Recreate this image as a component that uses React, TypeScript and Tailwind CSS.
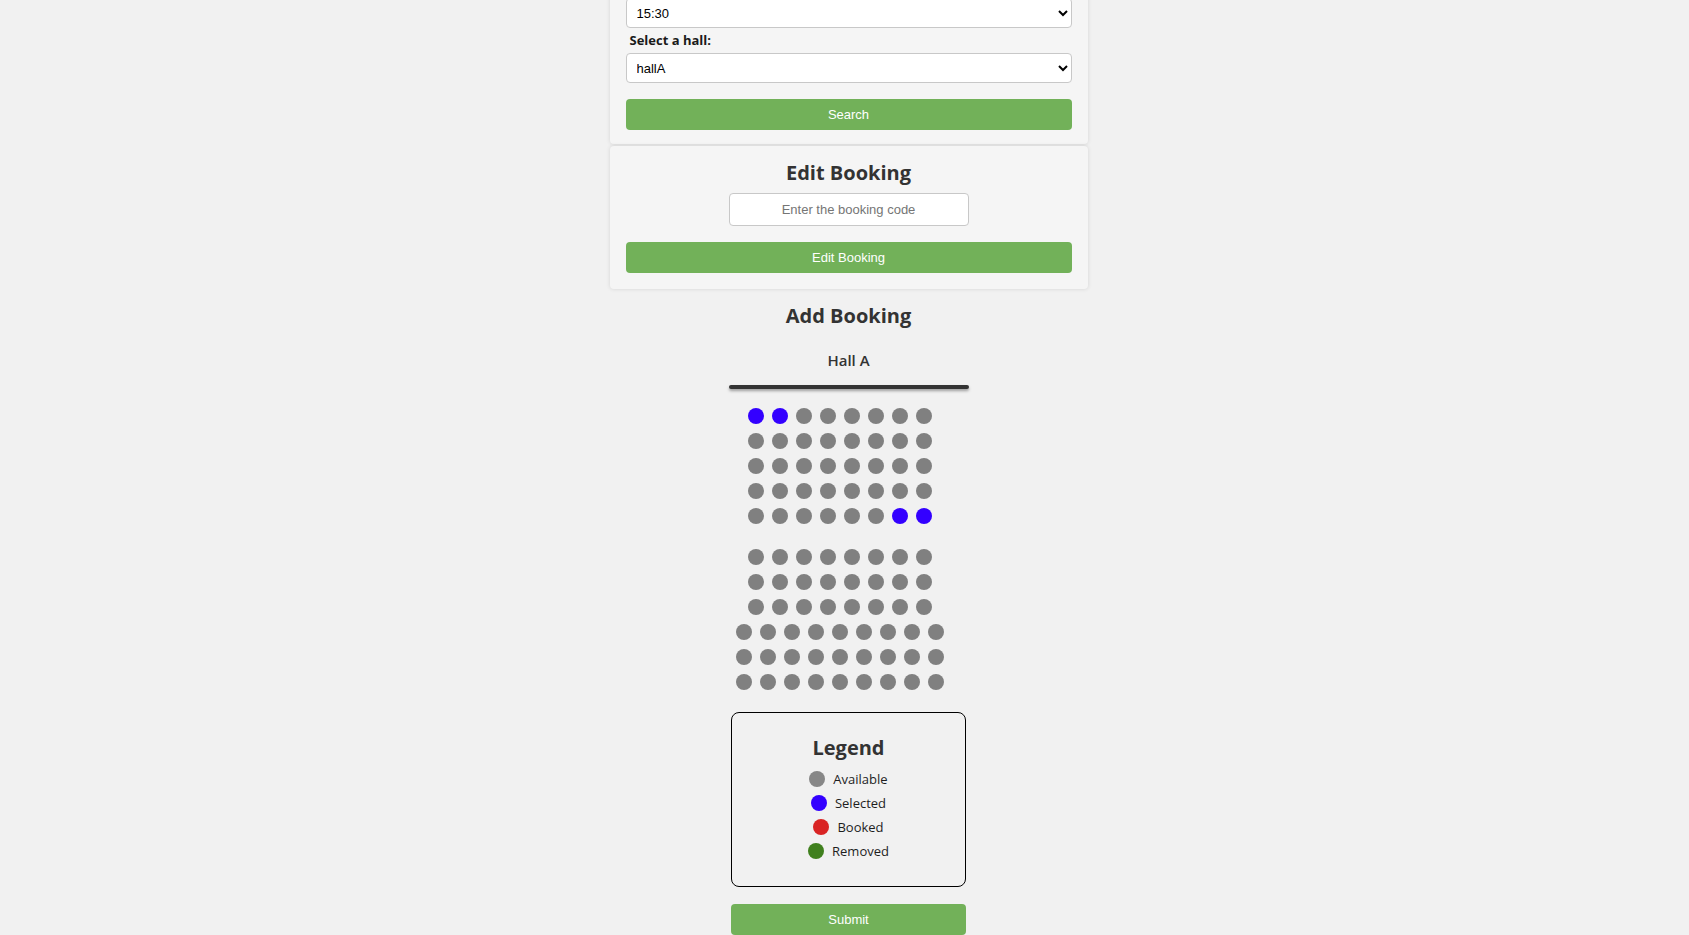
import React from "react";

const GRAY = "bg-[#808080]";
const BLUE = "bg-[#3300ff]";

function Seat({ selected }: { selected?: boolean }) {
  return <div className={`w-[16px] h-[16px] shrink-0 rounded-full ${selected ? BLUE : GRAY}`} />;
}

function Row({ count, selected = [] as number[] }: { count: number; selected?: number[] }) {
  return (
    <div className="flex gap-[8px]">
      {Array.from({ length: count }).map((_, i) => (
        <Seat key={i} selected={selected.includes(i)} />
      ))}
    </div>
  );
}

function LegendItem({ color, label }: { color: string; label: string }) {
  return (
    <div className="flex items-center justify-center gap-[8px] h-[16px]">
      <div className={`w-[16px] h-[16px] rounded-full ${color}`} />
      <span className="text-[13px] leading-[16px] text-[#1e1e1e]">{label}</span>
    </div>
  );
}

export default function App() {
  const arial = { fontFamily: '"Liberation Sans", Arial, sans-serif' };
  return (
    <div
      className="min-h-screen bg-[#f1f1f1] flex items-start justify-center pl-[8px] overflow-hidden"
      style={{ fontFamily: '"Open Sans", "Noto Sans", sans-serif' }}
    >
      <div className="w-[478px] -mt-[37px] flex flex-col items-center">
        {/* Search card */}
        <div className="w-full shrink-0 bg-[#f5f5f5] shadow-[0_0_4px_rgba(0,0,0,0.12)] rounded-[4px] px-[16px] pt-[13px] pb-[14px]">
          <label className="block pl-[4px] h-[18px] mb-[4px] text-[13px] leading-[18px] font-bold text-[#1a1a1a]">
            Select a time:
          </label>
          <select
            className="w-full h-[30px] bg-white border border-[#c8c8c8] rounded-[4px] pl-[6px] text-[13px] text-black"
            style={arial}
            defaultValue="15:30"
          >
            <option>15:30</option>
          </select>
          <label className="block pl-[4px] h-[18px] mt-[3px] mb-[4px] text-[13px] leading-[18px] font-bold text-[#1a1a1a]">
            Select a hall:
          </label>
          <select
            className="w-full h-[30px] bg-white border border-[#c8c8c8] rounded-[4px] pl-[6px] text-[13px] text-black"
            style={arial}
            defaultValue="hallA"
          >
            <option>hallA</option>
          </select>
          <button
            className="w-full h-[31px] mt-[16px] bg-[#72b159] rounded-[4px] text-white text-[13px]"
            style={arial}
          >
            Search
          </button>
        </div>

        {/* Edit booking card */}
        <div className="w-full shrink-0 mt-[2px] bg-[#f5f5f5] shadow-[0_0_4px_rgba(0,0,0,0.12)] rounded-[4px] px-[16px] pt-[15px] pb-[16px] flex flex-col items-center">
          <h2 className="text-[20px] leading-[24px] font-bold text-[#333]">Edit Booking</h2>
          <input
            className="mt-[8px] w-[240px] h-[33px] bg-white border border-[#c8c8c8] rounded-[4px] text-center text-[13px] placeholder:text-[#757575]"
            style={arial}
            placeholder="Enter the booking code"
          />
          <button
            className="w-full h-[31px] mt-[16px] bg-[#72b159] rounded-[4px] text-white text-[13px]"
            style={arial}
          >
            Edit Booking
          </button>
        </div>

        {/* Add booking */}
        <h2 className="shrink-0 mt-[15px] text-[20px] leading-[24px] font-bold text-[#333]">Add Booking</h2>
        <div className="shrink-0 mt-[22px] text-[15px] leading-[20px] font-semibold text-[#333]">Hall A</div>
        <div className="shrink-0 mt-[15px] w-[240px] h-[4px] rounded-full bg-[#333] shadow-[0_2px_3px_rgba(0,0,0,0.35)]" />

        <div className="shrink-0 mt-[19px] flex flex-col items-center gap-[9px] pr-[18px]">
          <Row count={8} selected={[0, 1]} />
          <Row count={8} />
          <Row count={8} />
          <Row count={8} />
          <Row count={8} selected={[6, 7]} />
          <div className="h-[7px]" />
          <Row count={8} />
          <Row count={8} />
          <Row count={8} />
          <Row count={9} />
          <Row count={9} />
          <Row count={9} />
        </div>

        {/* Legend */}
        <div className="shrink-0 mt-[22px] w-[235px] border border-black rounded-[8px] pt-[23px] pb-[27px] flex flex-col items-center">
          <h3 className="text-[20px] leading-[24px] font-bold text-[#333]">Legend</h3>
          <div className="mt-[11px] flex flex-col gap-[8px]">
            <LegendItem color="bg-[#878787]" label="Available" />
            <LegendItem color="bg-[#3300ff]" label="Selected" />
            <LegendItem color="bg-[#d92424]" label="Booked" />
            <LegendItem color="bg-[#40801e]" label="Removed" />
          </div>
        </div>

        <button
          className="shrink-0 mt-[17px] w-[235px] h-[31px] bg-[#72b159] rounded-[4px] text-white text-[13px]"
          style={arial}
        >
          Submit
        </button>
      </div>
    </div>
  );
}
